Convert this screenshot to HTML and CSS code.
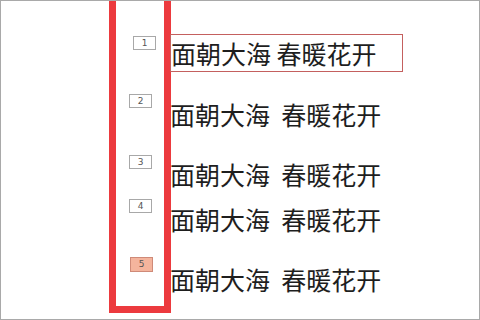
FILE: index.html
```html
<!DOCTYPE html>
<html lang="zh-CN">
<head>
  <meta charset="UTF-8" />
  <meta name="viewport" content="width=device-width, initial-scale=1.0" />
  <title>面朝大海</title>
  <link rel="stylesheet" href="styles.css">
</head>
<body>
  <div class="frame">
    <div class="marker">
      <span class="num num-1">1</span>
      <span class="num num-2">2</span>
      <span class="num num-3">3</span>
      <span class="num num-4">4</span>
      <span class="num num-5 active">5</span>
    </div>
    <div class="lines">
      <div class="line line-1 selected">面朝大海 春暖花开</div>
      <div class="line line-2">面朝大海&nbsp; 春暖花开</div>
      <div class="line line-3">面朝大海&nbsp; 春暖花开</div>
      <div class="line line-4">面朝大海&nbsp; 春暖花开</div>
      <div class="line line-5">面朝大海&nbsp; 春暖花开</div>
    </div>
  </div>
</body>
</html>
```

FILE: styles.css
```css
body {
  margin: 0;
  background: #fff;
  font-family: "Noto Sans CJK SC", "Noto Sans", sans-serif;
}
.frame {
  width: 480px;
  height: 320px;
  box-sizing: border-box;
  border: 1px solid #a9a9a9;
  overflow: hidden;
  display: flex;
  align-items: flex-start;
}
.marker {
  margin-left: 108px;
  width: 62px;
  height: 312px;
  padding-top: 35px;
  box-sizing: border-box;
  border: 7px solid #ec3a3e;
  border-top: none;
  display: flex;
  flex-direction: column;
  align-items: flex-start;
  flex-shrink: 0;
}
.num {
  width: 21px;
  height: 12px;
  border: 1px solid #a8a8a8;
  background: #fff;
  color: #555;
  font-family: "DejaVu Sans", sans-serif;
  font-size: 9px;
  line-height: 12px;
  text-align: center;
  margin-left: 13px;
}
.num-1 { margin-left: 17px; }
.num-2 { margin-top: 44px; }
.num-3 { margin-top: 47px; }
.num-4 { margin-top: 30px; }
.num-5 { margin-top: 44px; margin-left: 14px; height: 13px; line-height: 13px; }
.num.active {
  background: #f4b49d;
  border-color: #cf8a78;
}
.lines {
  margin-left: -1px;
  padding-top: 33px;
  display: flex;
  flex-direction: column;
}
.line {
  font-size: 25px;
  line-height: 36px;
  height: 36px;
  color: #1e1e1e;
  white-space: nowrap;
  margin-top: 24px;
}
.line-1 { margin-top: 0; }
.line-4 { margin-top: 9px; }
.selected {
  width: 231px;
  border: 1px solid #c4605e;
}
```
